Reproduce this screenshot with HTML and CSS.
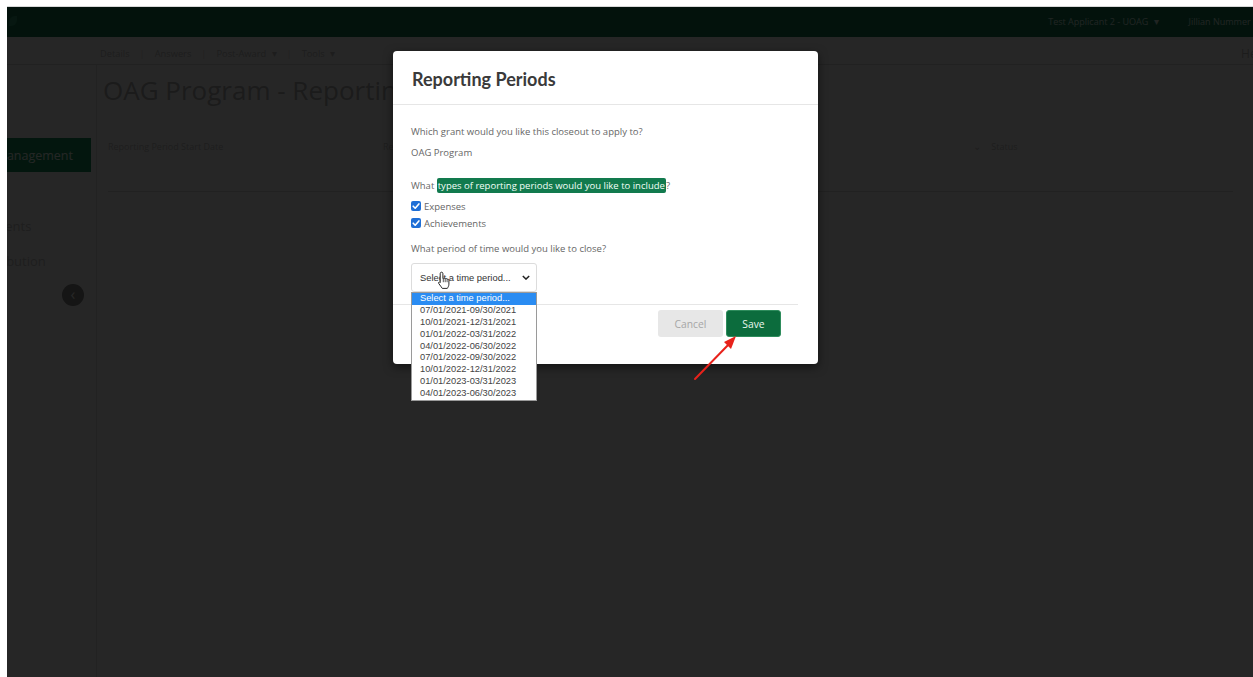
FILE: index.html
```html
<!DOCTYPE html>
<html lang="en">
<head>
<meta charset="utf-8">
<title>OAG Program - Reporting Periods</title>
<link rel="stylesheet" href="styles.css">
</head>
<body>
<div class="screen">
  <div class="app">
    <header class="topbar">
      <span class="logo"></span>
      <span class="top-item">Test Applicant 2 - UOAG <span class="caret">&#9662;</span></span>
      <span class="top-item user">Jillian Nummer <span class="caret">&#9662;</span></span>
    </header>
    <nav class="subnav">
      <a class="subnav-link">Details</a>
      <span class="sep">|</span>
      <a class="subnav-link">Answers</a>
      <span class="sep">|</span>
      <a class="subnav-link">Post-Award <span class="caret">&#9662;</span></a>
      <span class="sep">|</span>
      <a class="subnav-link">Tools <span class="caret">&#9662;</span></a>
      <span class="subnav-right">Help</span>
    </nav>
    <div class="layout">
      <aside class="sidebar">
        <div class="side-active">Management</div>
        <div class="side-list">
          <div class="side-item">Agreements</div>
          <div class="side-item item-wide">Distribution</div>
        </div>
        <div class="side-toggle">&#8249;</div>
      </aside>
      <main class="content">
        <h1 class="page-title">OAG Program - Reporting Periods</h1>
        <div class="table-head">
          <span class="th th-start">Reporting Period Start Date</span>
          <span class="th th-end">Reporting Period End Date</span>
          <span class="th th-status"><span class="sort">&#8964;</span> Status</span>
        </div>
        <div class="table-row"></div>
      </main>
    </div>
  </div>

  <div class="backdrop"></div>

  <div class="modal">
    <div class="modal-header">
      <h2 class="modal-title">Reporting Periods</h2>
    </div>
    <div class="modal-body">
      <p class="q q-first">Which grant would you like this closeout to apply to?</p>
      <p class="q q-grant">OAG Program</p>
      <p class="q q-types">What <span class="mark">types of reporting periods would you like to include</span>?</p>
      <label class="check"><span class="box"><svg viewBox="0 0 10 10" width="10" height="10"><path d="M2.2 5.2 L4.2 7.2 L7.9 2.9" fill="none" stroke="#fff" stroke-width="1.6" stroke-linecap="round" stroke-linejoin="round"/></svg></span>Expenses</label>
      <label class="check"><span class="box"><svg viewBox="0 0 10 10" width="10" height="10"><path d="M2.2 5.2 L4.2 7.2 L7.9 2.9" fill="none" stroke="#fff" stroke-width="1.6" stroke-linecap="round" stroke-linejoin="round"/></svg></span>Achievements</label>
      <p class="q q-period">What period of time would you like to close?</p>
      <div class="select">
        <span class="select-text">Select a time period...</span>
        <svg class="select-caret" viewBox="0 0 10 6" width="8" height="5"><path d="M1 1 L5 5 L9 1" fill="none" stroke="#222" stroke-width="1.8"/></svg>
      </div>
    </div>
    <div class="modal-footer">
      <button class="btn btn-cancel">Cancel</button>
      <button class="btn btn-save">Save</button>
    </div>

    <ul class="options">
      <li class="opt opt-active">Select a time period...</li>
      <li class="opt">07/01/2021-09/30/2021</li>
      <li class="opt">10/01/2021-12/31/2021</li>
      <li class="opt">01/01/2022-03/31/2022</li>
      <li class="opt">04/01/2022-06/30/2022</li>
      <li class="opt">07/01/2022-09/30/2022</li>
      <li class="opt">10/01/2022-12/31/2022</li>
      <li class="opt">01/01/2023-03/31/2023</li>
      <li class="opt">04/01/2023-06/30/2023</li>
    </ul>

    <svg class="pointer" viewBox="0 0 14 19" width="14" height="19">
      <path d="M4.5 1.2 C5.4 1.2 5.9 1.8 5.9 2.6 L5.9 7.6 L6.3 7.6 C6.6 7.0 7.9 7.0 8.2 7.8 C8.6 7.3 9.9 7.3 10.1 8.3 C10.5 7.9 11.8 8.0 11.9 9.2 L11.9 13.2 C11.9 15.0 11.0 16.2 10.3 17.4 L5.3 17.4 C4.6 16.2 3.0 14.4 1.8 12.6 C1.2 11.7 1.7 10.7 2.7 11.0 L3.2 11.5 L3.2 2.6 C3.2 1.8 3.7 1.2 4.5 1.2 Z" fill="#fff" stroke="#111" stroke-width="0.9" stroke-linejoin="round"/>
      <path d="M6.3 7.8 L6.3 11.2 M8.2 8.0 L8.2 11.2 M10.1 8.4 L10.1 11.2" stroke="#111" stroke-width="0.7"/>
    </svg>
  </div>

  <svg class="annotation" viewBox="0 0 50 50" width="50" height="50">
    <line x1="4" y1="46" x2="40" y2="9" stroke="#e8221b" stroke-width="2" stroke-linecap="round"/>
    <path d="M45 3 L33 9 L40 16 Z" fill="#e8221b"/>
  </svg>
</div>
</body>
</html>
```
FILE: styles.css
```css
* { box-sizing: border-box; }

html, body {
  margin: 0;
  padding: 0;
  background: #ffffff;
}

body {
  width: 1253px;
  height: 677px;
  overflow: hidden;
}

.screen {
  position: relative;
  margin: 6px 0 0 7px;
  height: 671px;
  overflow: hidden;
  background: #fff;
  border-top: 1px solid #d8d8d8;
  font-family: "Open Sans", "Liberation Sans", sans-serif;
}

/* ---------- application page behind the dialog ---------- */
.app {
  height: 100%;
  display: flex;
  flex-direction: column;
}

.topbar {
  height: 30px;
  flex: none;
  background: #147a52;
  display: flex;
  align-items: center;
  gap: 30px;
  padding: 0 0 3px 2px;
  color: #d6efe3;
  font-size: 9px;
  margin-right: -8px;
}

.logo {
  width: 8px;
  height: 10px;
  border-radius: 6px 0 6px 0;
  background: #2f9c70;
  margin-right: auto;
}

.top-item { white-space: nowrap; }

.caret {
  display: inline-block;
  margin-left: 3px;
  font-size: 10px;
}

.subnav {
  height: 28px;
  flex: none;
  display: flex;
  align-items: center;
  gap: 10px;
  padding: 5px 0 0 93px;
  font-size: 9.3px;
  color: #c4c4c4;
  border-bottom: 1px solid #dedede;
  margin-right: -14px;
}

.sep { color: #d6d6d6; }

.subnav-right {
  margin-left: auto;
  font-size: 12px;
  color: #bdbdbd;
}

.layout {
  flex: 1;
  display: flex;
  min-height: 0;
}

.sidebar {
  width: 90px;
  flex: none;
  border-right: 1px solid #e2e2e2;
  position: relative;
  padding-top: 73px;
  font-size: 13px;
}

.side-active {
  width: 84px;
  height: 34px;
  background: #16945f;
  color: #f0fff7;
  display: flex;
  align-items: center;
  justify-content: flex-end;
  padding-right: 18px;
  white-space: nowrap;
  font-size: 12.5px;
}

.side-list {
  margin-left: -49px;
  padding-top: 45px;
  display: flex;
  flex-direction: column;
  gap: 17px;
  color: #c8c8c8;
  white-space: nowrap;
}

.item-wide { margin-left: 16px; }

.side-toggle {
  position: absolute;
  left: 55px;
  top: 219px;
  width: 22px;
  height: 22px;
  border-radius: 50%;
  background: #8a8a8a;
  color: #fff;
  font-size: 16px;
  line-height: 20px;
  text-align: center;
}

.content {
  flex: 1;
  padding-left: 6px;
}

.page-title {
  margin: 7px 0 0;
  font-size: 26px;
  font-weight: 400;
  color: #b4b4b4;
  line-height: 36px;
  white-space: nowrap;
}

.table-head {
  margin-top: 27px;
  height: 22px;
  display: flex;
  align-items: center;
  padding-left: 5px;
  font-size: 9px;
  color: #c6c6c6;
}

.th-start { width: 275px; }
.th-end { width: 590px; }
.sort { font-size: 10px; margin-right: 8px; }

.table-row {
  margin: 34px 20px 0 5px;
  border-top: 1px solid #dedede;
}

.backdrop {
  position: absolute;
  inset: 0;
  background: rgba(0, 0, 0, 0.85);
}

/* ---------- dialog ---------- */
.modal {
  position: absolute;
  left: 386px;
  top: 44px;
  width: 425px;
  height: 313px;
  background: #fff;
  border-radius: 4px;
  box-shadow: 0 3px 10px rgba(0, 0, 0, 0.5);
}

.modal-header {
  height: 54px;
  padding: 2px 19px 0;
  display: flex;
  align-items: center;
  border-bottom: 1px solid #e6e6e6;
}

.modal-title {
  margin: 0;
  font-family: "Lato", "Liberation Sans", sans-serif;
  font-weight: 700;
  font-size: 18px;
  color: #3a3a3a;
}

.modal-body {
  padding: 20px 18px 12px;
  font-size: 9.5px;
  color: #666;
}

.q {
  margin: 0;
  line-height: 14px;
  white-space: nowrap;
}

.q-grant { margin-top: 7px; }
.q-types { margin-top: 19px; }
.q-period { margin-top: 12px; }

.mark {
  background: #127a4e;
  color: #f2fff8;
  padding: 1px 1px;
  border-radius: 2px;
}

.check {
  display: flex;
  align-items: center;
  height: 14px;
  gap: 3px;
  margin-top: 3px;
}

.q-types + .check { margin-top: 6px; }

.box {
  width: 10px;
  height: 10px;
  border-radius: 2px;
  background: #1f6fd6;
  display: flex;
}

.select {
  margin-top: 7px;
  width: 126px;
  height: 29px;
  border: 1px solid #dcdcdc;
  border-radius: 3px;
  display: flex;
  align-items: center;
  justify-content: space-between;
  padding: 0 6px 0 8px;
  font-family: "Liberation Sans", Arial, sans-serif;
  font-size: 9.4px;
  color: #333;
}

.modal-footer {
  margin-right: 20px;
  border-top: 1px solid #e6e6e6;
  padding: 5px 17px 0 0;
  display: flex;
  justify-content: flex-end;
  gap: 3px;
}

.btn {
  height: 27px;
  border: none;
  border-radius: 3px;
  font-family: "Open Sans", "Liberation Sans", sans-serif;
  font-size: 10.3px;
  padding: 0;
}

.btn-cancel {
  width: 65px;
  background: #e7e7e7;
  color: #a6a6a6;
}

.btn-save {
  width: 55px;
  background: #0c6c3d;
  color: #eaf7ef;
  border: 1px solid #2e8c5c;
}

/* open option list of the period select */
.options {
  position: absolute;
  left: 18px;
  top: 241px;
  width: 126px;
  margin: 0;
  padding: 0;
  list-style: none;
  background: #fff;
  border: 1px solid #9a9a9a;
  font-family: "Liberation Sans", Arial, sans-serif;
  font-size: 9.3px;
  color: #444;
}

.opt {
  height: 11.9px;
  line-height: 11.9px;
  padding-left: 8px;
  white-space: nowrap;
}

.opt-active {
  background: #2a8cf2;
  color: #fff;
}

.pointer {
  position: absolute;
  left: 44px;
  top: 220px;
}

.annotation {
  position: absolute;
  left: 684px;
  top: 326px;
}
```
